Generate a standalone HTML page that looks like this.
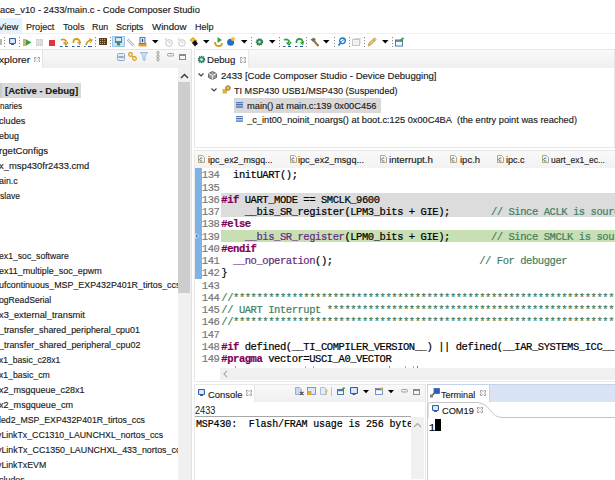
<!DOCTYPE html>
<html><head><meta charset="utf-8">
<style>
*{margin:0;padding:0;box-sizing:border-box}
html,body{width:615px;height:480px;overflow:hidden;background:#fff}
body{position:relative;font-family:"Liberation Sans",sans-serif;font-size:10px;color:#1a1a1a}
.a{position:absolute}
.t{position:absolute;white-space:nowrap;line-height:20px;-webkit-text-stroke-width:0.15px}
.c{position:absolute;white-space:nowrap;line-height:20px;font-family:"Liberation Mono",monospace;-webkit-text-stroke-width:0.2px}
.k{color:#7f0055;font-weight:bold}
.p{color:#642880}
.g{color:#3f7f5f}
.n{color:#787878}
</style></head><body>

<div class="t" style="left:0px;top:0px;font-size:9.8px;transform:scaleX(0.9531);transform-origin:0 0;color:#1a1a1a;">ace_v10 - 2433/main.c - Code Composer Studio</div>
<div class="a" style="left:0px;top:18px;width:22px;height:15px;background:#e5f1fb;"></div>
<div class="a" style="left:0px;top:33px;width:615px;height:1.2px;background:#efefef;"></div>
<div class="t" style="left:-2px;top:17px;font-size:9.8px;transform:scaleX(0.9732);transform-origin:0 0;">View</div>
<div class="t" style="left:26.3px;top:17px;font-size:9.8px;transform:scaleX(0.9278);transform-origin:0 0;">Project</div>
<div class="t" style="left:62.8px;top:17px;font-size:9.8px;transform:scaleX(0.9398);transform-origin:0 0;">Tools</div>
<div class="t" style="left:92.1px;top:17px;font-size:9.8px;transform:scaleX(0.9011);transform-origin:0 0;">Run</div>
<div class="t" style="left:116px;top:17px;font-size:9.8px;transform:scaleX(0.9115);transform-origin:0 0;">Scripts</div>
<div class="t" style="left:151.7px;top:17px;font-size:9.8px;transform:scaleX(0.9898);transform-origin:0 0;">Window</div>
<div class="t" style="left:194.6px;top:17px;font-size:9.8px;transform:scaleX(0.9228);transform-origin:0 0;">Help</div>
<div class="a" style="left:0px;top:39px;width:2px;height:6px;background:#b8b8b8;"></div>
<svg class="a" style="left:4px;top:37px" width="1" height="10" viewBox="0 0 1 10"><path d="M0.5 0v10" stroke="#8c8c8c" stroke-width="1" stroke-dasharray="1.2 1.8"/></svg>
<svg class="a" style="left:19px;top:37px" width="1" height="10" viewBox="0 0 1 10"><path d="M0.5 0v10" stroke="#8c8c8c" stroke-width="1" stroke-dasharray="1.2 1.8"/></svg>
<svg class="a" style="left:95px;top:37px" width="1" height="10" viewBox="0 0 1 10"><path d="M0.5 0v10" stroke="#8c8c8c" stroke-width="1" stroke-dasharray="1.2 1.8"/></svg>
<svg class="a" style="left:110px;top:37px" width="1" height="10" viewBox="0 0 1 10"><path d="M0.5 0v10" stroke="#8c8c8c" stroke-width="1" stroke-dasharray="1.2 1.8"/></svg>
<svg class="a" style="left:251px;top:37px" width="1" height="10" viewBox="0 0 1 10"><path d="M0.5 0v10" stroke="#8c8c8c" stroke-width="1" stroke-dasharray="1.2 1.8"/></svg>
<svg class="a" style="left:279px;top:37px" width="1" height="10" viewBox="0 0 1 10"><path d="M0.5 0v10" stroke="#8c8c8c" stroke-width="1" stroke-dasharray="1.2 1.8"/></svg>
<svg class="a" style="left:306px;top:37px" width="1" height="10" viewBox="0 0 1 10"><path d="M0.5 0v10" stroke="#8c8c8c" stroke-width="1" stroke-dasharray="1.2 1.8"/></svg>
<svg class="a" style="left:334px;top:37px" width="1" height="10" viewBox="0 0 1 10"><path d="M0.5 0v10" stroke="#8c8c8c" stroke-width="1" stroke-dasharray="1.2 1.8"/></svg>
<svg class="a" style="left:349px;top:37px" width="1" height="10" viewBox="0 0 1 10"><path d="M0.5 0v10" stroke="#8c8c8c" stroke-width="1" stroke-dasharray="1.2 1.8"/></svg>
<svg class="a" style="left:364px;top:37px" width="1" height="10" viewBox="0 0 1 10"><path d="M0.5 0v10" stroke="#8c8c8c" stroke-width="1" stroke-dasharray="1.2 1.8"/></svg>
<svg class="a" style="left:392px;top:37px" width="1" height="10" viewBox="0 0 1 10"><path d="M0.5 0v10" stroke="#8c8c8c" stroke-width="1" stroke-dasharray="1.2 1.8"/></svg>
<svg class="a" style="left:9px;top:38px" width="7" height="7" viewBox="0 0 7 7"><rect x="0.5" y="0.5" width="6" height="5" rx="1" fill="#dfe8f4" stroke="#2f5ea8" stroke-width="1.1"/><rect x="2" y="5.5" width="3" height="1.5" fill="#2f5ea8"/></svg>
<svg class="a" style="left:23px;top:39px" width="9" height="7" viewBox="0 0 9 7"><rect x="0" y="0" width="2.2" height="7" fill="#d9b44a"/><path d="M2.5 0 L8.5 3.5 L2.5 7z" fill="#3aa04a"/></svg>
<svg class="a" style="left:36px;top:39px" width="7" height="7" viewBox="0 0 7 7"><rect x="0.3" y="0.3" width="2.6" height="6.4" fill="#e2e2e2" stroke="#c4c4c4" stroke-width="0.6"/><rect x="4" y="0.3" width="2.6" height="6.4" fill="#e2e2e2" stroke="#c4c4c4" stroke-width="0.6"/></svg>
<div class="a" style="left:49px;top:40px;width:6px;height:6px;background:#e8303a;"></div>
<svg class="a" style="left:60px;top:38px" width="9" height="9" viewBox="0 0 9 9"><path d="M1 2 Q4 0.5 6 3 L5 5.5" fill="none" stroke="#d39b1c" stroke-width="1.8"/><path d="M3.5 4.5 L6 7 L8 4" fill="none" stroke="#d39b1c" stroke-width="1.4"/><path d="M0 8.5h2.5M5 8.5h3" stroke="#2a5aa0" stroke-width="1.2"/></svg>
<svg class="a" style="left:72px;top:38px" width="9" height="9" viewBox="0 0 9 9"><path d="M1.5 5 Q1 1 4.5 1 Q8 1 7.5 5" fill="none" stroke="#d39b1c" stroke-width="1.8"/><path d="M5.5 4 L7.5 6.5 L9 3.5" fill="none" stroke="#d39b1c" stroke-width="1.2"/><path d="M0 8.5h2.5M5 8.5h3" stroke="#2a5aa0" stroke-width="1.2"/></svg>
<svg class="a" style="left:84px;top:38px" width="9" height="9" viewBox="0 0 9 9"><path d="M2 7 Q3 3 7 2" fill="none" stroke="#d39b1c" stroke-width="1.8"/><path d="M5 0.5 L8 2 L6 5" fill="none" stroke="#d39b1c" stroke-width="1.2"/><path d="M0 8.5h1.5M4 8.5h4" stroke="#2a5aa0" stroke-width="1.2"/></svg>
<svg class="a" style="left:99px;top:38px" width="8" height="7" viewBox="0 0 8 7"><rect x="0" y="0" width="8" height="7" fill="#5a4020"/><path d="M1 1.5h6M1 3.5h6M1 5.5h6" stroke="#e8b050" stroke-width="0.9" stroke-dasharray="1 1"/></svg>
<div class="a" style="left:112px;top:36px;width:13px;height:11px;background:#cce4f7;border:1px solid #99c9ef"></div>
<svg class="a" style="left:114px;top:37px" width="9" height="9" viewBox="0 0 9 9"><rect x="1.5" y="0.5" width="6" height="4" fill="#dfe6f0" stroke="#5b7fb0" stroke-width="1"/><path d="M1 5.5h7" stroke="#5b7fb0"/><circle cx="4.5" cy="7" r="1.8" fill="#3a9a3a"/></svg>
<svg class="a" style="left:126px;top:38px" width="9" height="9" viewBox="0 0 9 9"><path d="M1.5 1.5 L7.5 7.5" stroke="#bdbdbd" stroke-width="2.6"/><path d="M1.5 1.5 L7.5 7.5" stroke="#eeeeee" stroke-width="1"/></svg>
<svg class="a" style="left:138px;top:37px" width="9" height="10" viewBox="0 0 9 10"><path d="M0.5 6 h8 v3.5 h-8z" fill="#e0a030"/><rect x="2" y="0.5" width="5" height="6" fill="#dfe8f2" stroke="#4a78b0"/><path d="M4.5 2v3" stroke="#1e4a90" stroke-width="1.2"/></svg>
<svg class="a" style="left:152px;top:40px" width="7" height="4" viewBox="0 0 7 4"><path d="M0 0h6.5L3.25 3.5z" fill="#000"/></svg>
<svg class="a" style="left:202.5px;top:40px" width="7" height="4" viewBox="0 0 7 4"><path d="M0 0h6.5L3.25 3.5z" fill="#000"/></svg>
<svg class="a" style="left:240.5px;top:40px" width="7" height="4" viewBox="0 0 7 4"><path d="M0 0h6.5L3.25 3.5z" fill="#000"/></svg>
<svg class="a" style="left:268.5px;top:40px" width="7" height="4" viewBox="0 0 7 4"><path d="M0 0h6.5L3.25 3.5z" fill="#000"/></svg>
<svg class="a" style="left:323px;top:40px" width="7" height="4" viewBox="0 0 7 4"><path d="M0 0h6.5L3.25 3.5z" fill="#000"/></svg>
<svg class="a" style="left:381.5px;top:40px" width="7" height="4" viewBox="0 0 7 4"><path d="M0 0h6.5L3.25 3.5z" fill="#000"/></svg>
<svg class="a" style="left:164px;top:38px" width="9" height="9" viewBox="0 0 9 9"><circle cx="5" cy="5" r="3.3" fill="#fff" stroke="#c4c4c4" stroke-width="1"/><path d="M0.5 2 L3 0.5 M5 3v2h1.5" stroke="#c4c4c4" stroke-width="0.9" fill="none"/></svg>
<svg class="a" style="left:177px;top:38px" width="9" height="9" viewBox="0 0 9 9"><circle cx="5" cy="5" r="3.3" fill="#fff" stroke="#c4c4c4" stroke-width="1"/><path d="M0.5 2 L3 0.5 M5 3v2h1.5" stroke="#c4c4c4" stroke-width="0.9" fill="none"/></svg>
<svg class="a" style="left:189px;top:37px" width="9" height="10" viewBox="0 0 9 10"><path d="M1 3 L4 0.5 L8 4 L5 7z" fill="#f0c030" stroke="#b08010" stroke-width="0.6"/><path d="M3 6 L6 3 L9 6.5 L6 9.5z" fill="#111"/></svg>
<svg class="a" style="left:214px;top:37px" width="9" height="10" viewBox="0 0 9 10"><path d="M1 5 Q1 9 4.5 9 Q8 9 8 6" fill="none" stroke="#d39b1c" stroke-width="1.8"/><path d="M4 0.5 L8 3 L4 5.5z" fill="#30a040"/><path d="M4 0.5v5" stroke="#30a040"/></svg>
<svg class="a" style="left:227px;top:37px" width="8" height="9" viewBox="0 0 8 9"><circle cx="3.6" cy="5.2" r="3.5" fill="#2a6cc0"/><circle cx="6" cy="2" r="2" fill="#f0c040"/></svg>
<svg class="a" style="left:255px;top:37px" width="9" height="10" viewBox="0 0 9 10"><circle cx="4.5" cy="5" r="3" fill="#3a9060" stroke="#2a6a4a" stroke-width="1.5" stroke-dasharray="1.2 0.9"/><circle cx="4.5" cy="5" r="1.2" fill="#c8f0c0"/></svg>
<svg class="a" style="left:283px;top:38px" width="9" height="9" viewBox="0 0 9 9"><path d="M1 2 Q4 0.5 6 3 L5 5.5" fill="none" stroke="#30a040" stroke-width="1.8"/><path d="M3.5 4.5 L6 7 L8 4" fill="none" stroke="#30a040" stroke-width="1.4"/><path d="M0 8.5h2.5M5 8.5h3" stroke="#2a5aa0" stroke-width="1.2"/></svg>
<svg class="a" style="left:295px;top:38px" width="9" height="9" viewBox="0 0 9 9"><path d="M1.5 5 Q1 1 4.5 1 Q8 1 7.5 5" fill="none" stroke="#30a040" stroke-width="1.8"/><path d="M5.5 4 L7.5 6.5 L9 3.5" fill="none" stroke="#30a040" stroke-width="1.2"/><path d="M0 8.5h2.5M5 8.5h3" stroke="#2a5aa0" stroke-width="1.2"/></svg>
<svg class="a" style="left:310px;top:37px" width="9" height="10" viewBox="0 0 9 10"><path d="M0.5 2.5 L4 0.5 L6 3 L3 5z" fill="#707070"/><path d="M4 4 L8.5 9" stroke="#a0703a" stroke-width="2"/></svg>
<svg class="a" style="left:338px;top:37px" width="8" height="9" viewBox="0 0 8 9"><circle cx="4.5" cy="3.8" r="2.8" fill="none" stroke="#1a74c0" stroke-width="1.4"/><path d="M2.5 6 L0.5 8.5" stroke="#1a74c0" stroke-width="1.6"/><path d="M3 5 L6 2.5" stroke="#1a74c0" stroke-width="0.9"/></svg>
<svg class="a" style="left:352px;top:38px" width="9" height="8" viewBox="0 0 9 8"><rect x="0.5" y="1.5" width="7" height="6" fill="#f2f2f2" stroke="#c8c8c8"/><path d="M2 0.5h7v6" fill="none" stroke="#d4d4d4"/></svg>
<svg class="a" style="left:367px;top:37px" width="10" height="10" viewBox="0 0 10 10"><path d="M1 9 L2 6 L7.5 0.8 L9.2 2.5 L3.8 8z" fill="#f0c060" stroke="#c09040" stroke-width="0.7"/><path d="M6 2.5 L7.5 4" stroke="#a0a0a0"/></svg>
<svg class="a" style="left:395px;top:37px" width="10" height="10" viewBox="0 0 10 10"><rect x="0.5" y="3" width="7" height="6" fill="#f8f8f8" stroke="#4a78b0"/><path d="M0.5 4h7" stroke="#4a78b0" stroke-width="1.5"/><path d="M5 4 L8.5 0.8" stroke="#30a040" stroke-width="1.8"/></svg>
<div class="a" style="left:0px;top:49px;width:192px;height:19px;background:linear-gradient(#f9f9f9,#efefef);border-top:1px solid #e4e4e4"></div>
<div class="a" style="left:0px;top:49px;width:43px;height:19px;background:#fff;border-top:1px solid #e4e4e4;border-right:1px solid #e4e4e4"></div>
<div class="t" style="left:-1px;top:50px;font-size:9.8px;transform:scaleX(1.0415);transform-origin:0 0;">xplorer</div>
<svg class="a" style="left:34px;top:57px" width="6" height="5" viewBox="0 0 6 5"><path d="M0.5 0.5h1.5l1 1 1-1h1.5v1.5l-1 1 1 1v1.5h-1.5l-1-1-1 1h-1.5v-1.5l1-1-1-1z" fill="none" stroke="#8a8a8a" stroke-width="0.8"/></svg>
<div class="a" style="left:191px;top:49px;width:1px;height:431px;background:#e3e3e3;"></div>
<div class="a" style="left:178px;top:68px;width:13px;height:412px;background:#f0f0f0;"></div>
<div class="a" style="left:178px;top:82px;width:12px;height:211px;background:#cdcdcd;"></div>
<svg class="a" style="left:180px;top:73px" width="9" height="6" viewBox="0 0 9 6"><path d="M1 5 L4.5 1.5 L8 5" fill="none" stroke="#404040" stroke-width="1.5"/></svg>
<div class="a" style="left:0px;top:83px;width:81px;height:15px;background:#d9d9d9;"></div>
<div class="a" style="left:0px;top:83px;width:1.5px;height:15px;background:#cbcbcb;"></div>
<div class="t" style="left:5px;top:81px;font-size:9.8px;transform:scaleX(0.9729);transform-origin:0 0;font-weight:bold;">[Active - Debug]</div>
<div class="a" style="left:0;top:68px;width:178px;height:412px;overflow:hidden">
<div class="t" style="left:0px;top:28px;font-size:9.8px;transform:scaleX(0.8279);transform-origin:0 0;">naries</div>
<div class="t" style="left:-1px;top:43px;font-size:9.8px;transform:scaleX(0.9284);transform-origin:0 0;">cludes</div>
<div class="t" style="left:-1px;top:58px;font-size:9.8px;transform:scaleX(0.9173);transform-origin:0 0;">ebug</div>
<div class="t" style="left:-1px;top:73px;font-size:9.8px;transform:scaleX(0.9817);transform-origin:0 0;">rgetConfigs</div>
<div class="t" style="left:-1px;top:88px;font-size:9.8px;transform:scaleX(0.9582);transform-origin:0 0;">x_msp430fr2433.cmd</div>
<div class="t" style="left:-1px;top:103px;font-size:9.8px;transform:scaleX(0.9033);transform-origin:0 0;">ain.c</div>
<div class="t" style="left:0px;top:118px;font-size:9.8px;transform:scaleX(0.8742);transform-origin:0 0;">slave</div>
<div class="t" style="left:-1px;top:178px;font-size:9.8px;transform:scaleX(0.8837);transform-origin:0 0;">ex1_soc_software</div>
<div class="t" style="left:-1px;top:193px;font-size:9.8px;transform:scaleX(0.9175);transform-origin:0 0;">ex11_multiple_soc_epwm</div>
<div class="t" style="left:-1px;top:207px;font-size:9.8px;transform:scaleX(0.905);transform-origin:0 0;">ufcontinuous_MSP_EXP432P401R_tirtos_ccs</div>
<div class="t" style="left:-1px;top:222px;font-size:9.8px;transform:scaleX(0.8790);transform-origin:0 0;">ogReadSerial</div>
<div class="t" style="left:-1px;top:237px;font-size:9.8px;transform:scaleX(0.9443);transform-origin:0 0;">x3_external_transmit</div>
<div class="t" style="left:-1px;top:252px;font-size:9.8px;transform:scaleX(0.9074);transform-origin:0 0;">_transfer_shared_peripheral_cpu01</div>
<div class="t" style="left:-1px;top:267px;font-size:9.8px;transform:scaleX(0.9106);transform-origin:0 0;">_transfer_shared_peripheral_cpu02</div>
<div class="t" style="left:-1px;top:282px;font-size:9.8px;transform:scaleX(0.8736);transform-origin:0 0;">x1_basic_c28x1</div>
<div class="t" style="left:-1px;top:297px;font-size:9.8px;transform:scaleX(0.8882);transform-origin:0 0;">x1_basic_cm</div>
<div class="t" style="left:-1px;top:312px;font-size:9.8px;transform:scaleX(0.9188);transform-origin:0 0;">x2_msgqueue_c28x1</div>
<div class="t" style="left:-1px;top:327px;font-size:9.8px;transform:scaleX(0.9253);transform-origin:0 0;">x2_msgqueue_cm</div>
<div class="t" style="left:-1px;top:342px;font-size:9.8px;transform:scaleX(0.8933);transform-origin:0 0;">led2_MSP_EXP432P401R_tirtos_ccs</div>
<div class="t" style="left:-3px;top:357px;font-size:9.8px;transform:scaleX(0.8942);transform-origin:0 0;">yLinkTx_CC1310_LAUNCHXL_nortos_ccs</div>
<div class="t" style="left:-3px;top:372px;font-size:9.8px;transform:scaleX(0.905);transform-origin:0 0;">yLinkTx_CC1350_LAUNCHXL_433_nortos_ccs</div>
<div class="t" style="left:-3px;top:387px;font-size:9.8px;transform:scaleX(0.8945);transform-origin:0 0;">yLinkTxEVM</div>
<div class="t" style="left:-1px;top:402px;font-size:9.8px;transform:scaleX(0.91);transform-origin:0 0;">cludes</div>
</div>
<svg class="a" style="left:116.5px;top:53px" width="8" height="8" viewBox="0 0 8 8"><rect x="0.5" y="0.5" width="7" height="7" rx="1" fill="#e4ecf6" stroke="#8aaad0"/><path d="M1.5 4h5" stroke="#6a7a90" stroke-width="1.2"/></svg>
<svg class="a" style="left:128px;top:52px" width="9" height="9" viewBox="0 0 9 9"><circle cx="2.5" cy="2.5" r="1.8" fill="none" stroke="#d49a20" stroke-width="1.2"/><circle cx="6.5" cy="6.5" r="1.8" fill="none" stroke="#d49a20" stroke-width="1.2"/><path d="M3.5 3.5 L5.5 5.5" stroke="#d49a20"/></svg>
<svg class="a" style="left:140px;top:52px" width="8" height="9" viewBox="0 0 8 9"><path d="M0.5 0.5h7L5 4v4.5L3 7.5V4z" fill="#d8e6f6" stroke="#8ab0d8" stroke-width="0.9"/></svg>
<svg class="a" style="left:156px;top:51px" width="4" height="11" viewBox="0 0 4 11"><ellipse cx="2" cy="1.7" rx="1.1" ry="1.4" fill="none" stroke="#8a8a8a" stroke-width="0.8"/><ellipse cx="2" cy="5.2" rx="1.1" ry="1.4" fill="none" stroke="#8a8a8a" stroke-width="0.8"/><ellipse cx="2" cy="8.7" rx="1.1" ry="1.4" fill="none" stroke="#8a8a8a" stroke-width="0.8"/></svg>
<svg class="a" style="left:166.5px;top:53px" width="7" height="4" viewBox="0 0 7 4"><rect x="0.5" y="0.5" width="6" height="2.5" rx="1" fill="none" stroke="#9a9a9a" stroke-width="1"/></svg>
<svg class="a" style="left:179px;top:53.5px" width="7" height="6" viewBox="0 0 7 6"><rect x="0.5" y="0.5" width="6" height="5" fill="none" stroke="#8a8a8a" stroke-width="1"/><path d="M0.5 1.5h6" stroke="#8a8a8a" stroke-width="1"/></svg>
<div class="a" style="left:194px;top:49px;width:421px;height:99px;background:#fff;border:1px solid #e8e8e8;border-right:1px solid #e8e8e8"></div>
<div class="a" style="left:195px;top:50px;width:419px;height:18px;background:linear-gradient(#f9f9f9,#efefef);"></div>
<div class="a" style="left:195px;top:50px;width:54px;height:18px;background:#fff;border-right:1px solid #e8e8e8"></div>
<svg class="a" style="left:196.5px;top:54.5px" width="9" height="9" viewBox="0 0 9 9"><circle cx="4.5" cy="4.5" r="3" fill="#3a9a7a" stroke="#2a6a5a" stroke-width="1.6" stroke-dasharray="1.1 0.8"/><circle cx="4.5" cy="4.5" r="1.3" fill="#e0f8c0"/></svg>
<div class="t" style="left:207.3px;top:50px;font-size:9.8px;transform:scaleX(0.9799);transform-origin:0 0;">Debug</div>
<svg class="a" style="left:239.5px;top:56.5px" width="6" height="6" viewBox="0 0 6 6"><path d="M0.5 0.5h1.5l1 1 1-1h1.5v1.5l-1 1 1 1v1.5h-1.5l-1-1-1 1h-1.5v-1.5l1-1-1-1z" fill="none" stroke="#8a8a8a" stroke-width="0.8"/></svg>
<svg class="a" style="left:198px;top:73px" width="6" height="4" viewBox="0 0 6 4"><path d="M0.5 0.5 L3 3 L5.5 0.5" fill="none" stroke="#444" stroke-width="1.2"/></svg>
<svg class="a" style="left:211px;top:88px" width="6" height="4" viewBox="0 0 6 4"><path d="M0.5 0.5 L3 3 L5.5 0.5" fill="none" stroke="#444" stroke-width="1.2"/></svg>
<svg class="a" style="left:208px;top:71px" width="9" height="9" viewBox="0 0 9 9"><path d="M4.5 0.5 L8.5 2.5 V6.5 L4.5 8.5 L0.5 6.5 V2.5z" fill="#9a9a9a" stroke="#606060" stroke-width="0.9"/><path d="M0.5 2.5 L4.5 4.5 L8.5 2.5 M4.5 4.5V8.5" fill="none" stroke="#f0f0f0" stroke-width="0.9"/></svg>
<svg class="a" style="left:222px;top:85px" width="9" height="9" viewBox="0 0 9 9"><rect x="0.5" y="4" width="4.5" height="4.5" fill="#e0b040"/><circle cx="6" cy="3" r="2.3" fill="#e8c050" stroke="#8a6a30" stroke-width="0.9"/></svg>
<div class="a" style="left:234px;top:98px;width:147px;height:15px;background:#d9d9d9;"></div>
<div class="t" style="left:221px;top:66px;font-size:9.8px;transform:scaleX(0.9772);transform-origin:0 0;">2433 [Code Composer Studio - Device Debugging]</div>
<div class="t" style="left:234.1px;top:81px;font-size:9.8px;transform:scaleX(0.9269);transform-origin:0 0;">TI MSP430 USB1/MSP430 (Suspended)</div>
<svg class="a" style="left:236px;top:101.5px" width="7" height="6" viewBox="0 0 7 6"><path d="M0 0.7h7M0 2.4h7M0 4.1h7M0 5.8h7" stroke="#3a6ab0" stroke-width="1"/></svg>
<svg class="a" style="left:236px;top:116px" width="7" height="6" viewBox="0 0 7 6"><path d="M0 0.7h7M0 2.4h7M0 4.1h7M0 5.8h7" stroke="#3a6ab0" stroke-width="1"/></svg>
<div class="t" style="left:246.5px;top:96px;font-size:9.8px;transform:scaleX(0.9471);transform-origin:0 0;">main() at main.c:139 0x00C456</div>
<div class="t" style="left:246.5px;top:110px;font-size:9.8px;transform:scaleX(0.9453);transform-origin:0 0;">_c_int00_noinit_noargs() at boot.c:125 0x00C4BA&nbsp; (the entry point was reached)</div>
<div class="a" style="left:194px;top:150px;width:421px;height:232px;background:#fff;border:1px solid #e8e8e8;border-right:none"></div>
<div class="a" style="left:195px;top:151px;width:420px;height:17px;background:linear-gradient(#f9f9f9,#f2f2f2);"></div>
<svg class="a" style="left:198px;top:155px" width="7" height="8" viewBox="0 0 7 8"><path d="M0.5 0.5h4l2 2v5h-6z" fill="#fbf6e6" stroke="#a89060" stroke-width="0.8"/><path d="M4.3 3.3a1.6 1.6 0 1 0 0 2.6" fill="none" stroke="#3a6ab0" stroke-width="1"/></svg>
<div class="t" style="left:207.6px;top:150px;font-size:9.8px;transform:scaleX(0.9038);transform-origin:0 0;">ipc_ex2_msgq...</div>
<svg class="a" style="left:289.7px;top:155px" width="7" height="8" viewBox="0 0 7 8"><path d="M0.5 0.5h4l2 2v5h-6z" fill="#fbf6e6" stroke="#a89060" stroke-width="0.8"/><path d="M4.3 3.3a1.6 1.6 0 1 0 0 2.6" fill="none" stroke="#3a6ab0" stroke-width="1"/></svg>
<div class="t" style="left:298px;top:150px;font-size:9.8px;transform:scaleX(0.9249);transform-origin:0 0;">ipc_ex2_msgq...</div>
<svg class="a" style="left:380px;top:155px" width="7" height="8" viewBox="0 0 7 8"><path d="M0.5 0.5h4l2 2v5h-6z" fill="#fbf6e6" stroke="#a89060" stroke-width="0.8"/><path d="M4.3 3.3a1.6 1.6 0 1 0 0 2.6" fill="none" stroke="#3a6ab0" stroke-width="1"/></svg>
<div class="t" style="left:389px;top:150px;font-size:9.8px;transform:scaleX(0.9972);transform-origin:0 0;">interrupt.h</div>
<svg class="a" style="left:450.4px;top:155px" width="7" height="8" viewBox="0 0 7 8"><path d="M0.5 0.5h4l2 2v5h-6z" fill="#fbf6e6" stroke="#a89060" stroke-width="0.8"/><path d="M4.3 3.3a1.6 1.6 0 1 0 0 2.6" fill="none" stroke="#3a6ab0" stroke-width="1"/></svg>
<div class="t" style="left:459.5px;top:150px;font-size:9.8px;transform:scaleX(0.9710);transform-origin:0 0;">ipc.h</div>
<svg class="a" style="left:497px;top:155px" width="7" height="8" viewBox="0 0 7 8"><path d="M0.5 0.5h4l2 2v5h-6z" fill="#fbf6e6" stroke="#a89060" stroke-width="0.8"/><path d="M4.3 3.3a1.6 1.6 0 1 0 0 2.6" fill="none" stroke="#3a6ab0" stroke-width="1"/></svg>
<div class="t" style="left:506px;top:150px;font-size:9.8px;transform:scaleX(0.9231);transform-origin:0 0;">ipc.c</div>
<svg class="a" style="left:541.8px;top:155px" width="7" height="8" viewBox="0 0 7 8"><path d="M0.5 0.5h4l2 2v5h-6z" fill="#fbf6e6" stroke="#a89060" stroke-width="0.8"/><path d="M4.3 3.3a1.6 1.6 0 1 0 0 2.6" fill="none" stroke="#3a6ab0" stroke-width="1"/></svg>
<div class="t" style="left:551px;top:150px;font-size:9.8px;transform:scaleX(0.8695);transform-origin:0 0;">uart_ex1_ec...</div>
<div class="a" style="left:195px;top:168px;width:7px;height:111px;background:#7fb2e5;"></div>
<svg class="a" style="left:195px;top:233px" width="5" height="6" viewBox="0 0 5 6"><path d="M0.5 0.5 L4 3 L0.5 5.5z" fill="#4a7ab0" stroke="#fff" stroke-width="0.6"/></svg>
<div class="a" style="left:220.5px;top:193px;width:395px;height:24px;background:#dcdcdc;"></div>
<div class="a" style="left:220.5px;top:229.5px;width:395px;height:12px;background:#c8dfb4;"></div>
<div class="a" style="left:195px;top:168px;width:420px;height:199px;overflow:hidden">
<div class="c n" style="left:6.800000000000011px;top:-3px;font-size:10.5px;letter-spacing:-0.440px">134</div>
<div class="c" style="left:26.30000000000001px;top:-3px;font-size:10.5px;letter-spacing:-0.440px;color:#000">&nbsp; initUART();</div>
<div class="c n" style="left:6.800000000000011px;top:10px;font-size:10.5px;letter-spacing:-0.440px">135</div>
<div class="c n" style="left:6.800000000000011px;top:22px;font-size:10.5px;letter-spacing:-0.440px">136</div>
<div class="c" style="left:26.30000000000001px;top:22px;font-size:10.5px;letter-spacing:-0.440px;color:#000"><span class="k">#if</span> UART_MODE == SMCLK_9600</div>
<div class="c n" style="left:6.800000000000011px;top:34px;font-size:10.5px;letter-spacing:-0.440px">137</div>
<div class="c" style="left:26.30000000000001px;top:34px;font-size:10.5px;letter-spacing:-0.440px;color:#000">&nbsp; &nbsp; __bis_SR_register(LPM3_bits + GIE);&nbsp; &nbsp; &nbsp; &nbsp;<span class="g">// Since ACLK is source</span></div>
<div class="c n" style="left:6.800000000000011px;top:46px;font-size:10.5px;letter-spacing:-0.440px">138</div>
<div class="c" style="left:26.30000000000001px;top:46px;font-size:10.5px;letter-spacing:-0.440px;color:#000"><span class="k">#else</span></div>
<div class="c n" style="left:6.800000000000011px;top:59px;font-size:10.5px;letter-spacing:-0.440px">139</div>
<div class="c" style="left:26.30000000000001px;top:59px;font-size:10.5px;letter-spacing:-0.440px;color:#000">&nbsp; &nbsp; <span class="p">__bis_SR_register</span>(LPM0_bits + GIE);&nbsp; &nbsp; &nbsp; &nbsp;<span class="g">// Since SMCLK is source</span></div>
<div class="c n" style="left:6.800000000000011px;top:71px;font-size:10.5px;letter-spacing:-0.440px">140</div>
<div class="c" style="left:26.30000000000001px;top:71px;font-size:10.5px;letter-spacing:-0.440px;color:#000"><span class="k">#endif</span></div>
<div class="c n" style="left:6.800000000000011px;top:83px;font-size:10.5px;letter-spacing:-0.440px">141</div>
<div class="c" style="left:26.30000000000001px;top:83px;font-size:10.5px;letter-spacing:-0.440px;color:#000">&nbsp; <span class="p">__no_operation</span>();&nbsp; &nbsp; &nbsp; &nbsp; &nbsp; &nbsp; &nbsp; &nbsp; &nbsp; &nbsp; &nbsp; &nbsp; &nbsp;<span class="g">// For debugger</span></div>
<div class="c n" style="left:6.800000000000011px;top:95px;font-size:10.5px;letter-spacing:-0.440px">142</div>
<div class="c" style="left:26.30000000000001px;top:95px;font-size:10.5px;letter-spacing:-0.440px;color:#000">}</div>
<div class="c n" style="left:6.800000000000011px;top:108px;font-size:10.5px;letter-spacing:-0.440px">143</div>
<div class="c n" style="left:6.800000000000011px;top:120px;font-size:10.5px;letter-spacing:-0.440px">144</div>
<div class="c" style="left:26.30000000000001px;top:120px;font-size:10.5px;letter-spacing:-0.440px;color:#000"><span class="g">//********************************************************************************</span></div>
<div class="c n" style="left:6.800000000000011px;top:132px;font-size:10.5px;letter-spacing:-0.440px">145</div>
<div class="c" style="left:26.30000000000001px;top:132px;font-size:10.5px;letter-spacing:-0.440px;color:#000"><span class="g">// UART Interrupt ********************************************************************************</span></div>
<div class="c n" style="left:6.800000000000011px;top:144px;font-size:10.5px;letter-spacing:-0.440px">146</div>
<div class="c" style="left:26.30000000000001px;top:144px;font-size:10.5px;letter-spacing:-0.440px;color:#000"><span class="g">//********************************************************************************</span></div>
<div class="c n" style="left:6.800000000000011px;top:157px;font-size:10.5px;letter-spacing:-0.440px">147</div>
<div class="c n" style="left:6.800000000000011px;top:169px;font-size:10.5px;letter-spacing:-0.440px">148</div>
<div class="c" style="left:26.30000000000001px;top:169px;font-size:10.5px;letter-spacing:-0.440px;color:#000"><span class="k">#if</span> defined(__TI_COMPILER_VERSION__) || defined(__IAR_SYSTEMS_ICC__)</div>
<div class="c n" style="left:6.800000000000011px;top:181px;font-size:10.5px;letter-spacing:-0.440px">149</div>
<div class="c" style="left:26.30000000000001px;top:181px;font-size:10.5px;letter-spacing:-0.440px;color:#000"><span class="k">#pragma</span> vector=USCI_A0_VECTOR</div>
</div>
<div class="a" style="left:235px;top:366px;width:1.2px;height:1.5px;background:#c890b8;"></div>
<div class="a" style="left:305px;top:366px;width:1.2px;height:1.5px;background:#d0a0c0;"></div>
<div class="a" style="left:313px;top:366px;width:1.2px;height:1.5px;background:#d0a0c0;"></div>
<div class="a" style="left:388.5px;top:366px;width:1.2px;height:1.5px;background:#8090b0;"></div>
<div class="a" style="left:405px;top:366px;width:1.2px;height:1.5px;background:#d0a0c0;"></div>
<div class="a" style="left:412.5px;top:366px;width:1.2px;height:1.5px;background:#d0a0c0;"></div>
<div class="a" style="left:417px;top:366px;width:1.2px;height:1.5px;background:#707890;"></div>
<div class="a" style="left:219.7px;top:367.5px;width:395.3px;height:12.5px;background:#f0f0f0;"></div>
<svg class="a" style="left:223px;top:370px" width="5" height="8" viewBox="0 0 5 8"><path d="M4 0.8 L1 4 L4 7.2" fill="none" stroke="#a8a8a8" stroke-width="1.1"/></svg>
<div class="a" style="left:194px;top:384px;width:232px;height:97px;background:#fff;border:1px solid #e8e8e8;border-bottom:none"></div>
<div class="a" style="left:195px;top:385px;width:230px;height:17px;background:linear-gradient(#f9f9f9,#efefef);"></div>
<div class="a" style="left:195px;top:385px;width:60px;height:17px;background:#fff;border-right:1px solid #e8e8e8"></div>
<svg class="a" style="left:198px;top:389px" width="7" height="7" viewBox="0 0 7 7"><rect x="0.5" y="0.5" width="6" height="5" rx="1" fill="#dfe8f4" stroke="#2f5ea8" stroke-width="1.1"/><path d="M2 6.5h3" stroke="#2f5ea8"/></svg>
<div class="t" style="left:207.5px;top:385px;font-size:9.8px;transform:scaleX(0.9595);transform-origin:0 0;">Console</div>
<svg class="a" style="left:246px;top:390px" width="6" height="6" viewBox="0 0 6 6"><path d="M0.5 0.5h1.5l1 1 1-1h1.5v1.5l-1 1 1 1v1.5h-1.5l-1-1-1 1h-1.5v-1.5l1-1-1-1z" fill="none" stroke="#8a8a8a" stroke-width="0.8"/></svg>
<svg class="a" style="left:295px;top:387px" width="9" height="8" viewBox="0 0 9 8"><path d="M0.5 0.5h4l2 2v5h-6z" fill="#c8d8f0" stroke="#8aa0c0" stroke-width="0.8"/><path d="M5 5 L8.5 8 M8.5 5 L5 8" stroke="#444" stroke-width="1.1"/></svg>
<svg class="a" style="left:307px;top:387px" width="9" height="8" viewBox="0 0 9 8"><rect x="0.5" y="0.5" width="8" height="7" fill="#dce8f6" stroke="#5a88c0" stroke-width="0.8"/><rect x="0.5" y="4" width="4" height="4" fill="#e8a830"/></svg>
<svg class="a" style="left:319.5px;top:387px" width="9" height="8" viewBox="0 0 9 8"><path d="M0.5 0.5h4l2 2v5h-6z" fill="#e6ecf4" stroke="#9ab0d0" stroke-width="0.8"/><path d="M5 2 L8 4 L5 7z" fill="#f0c040"/></svg>
<div class="a" style="left:331px;top:387px;width:1px;height:9px;background:#c0c0c0;"></div>
<svg class="a" style="left:337px;top:387px" width="8" height="8" viewBox="0 0 8 8"><rect x="0.5" y="2.5" width="6" height="5" fill="#f4f4f4" stroke="#4a78b0"/><path d="M0.5 3.5h6" stroke="#4a78b0" stroke-width="1.4"/><path d="M4 3.5 L7.5 0.5" stroke="#30a040" stroke-width="1.6"/></svg>
<svg class="a" style="left:349.5px;top:387px" width="8" height="8" viewBox="0 0 8 8"><rect x="0.5" y="0.5" width="7" height="6" rx="1" fill="#dfe8f4" stroke="#2f5ea8" stroke-width="1.1"/><path d="M2.5 7.5h3" stroke="#2f5ea8"/></svg>
<svg class="a" style="left:362.5px;top:389.5px" width="7" height="4" viewBox="0 0 7 4"><path d="M0 0h6L3 3.3z" fill="#000"/></svg>
<svg class="a" style="left:374.5px;top:387px" width="9" height="8" viewBox="0 0 9 8"><rect x="0.5" y="1.5" width="7" height="6" fill="#f8f8f8" stroke="#5a7ab0" stroke-width="0.8"/><path d="M0.5 2.5h7" stroke="#5a7ab0" stroke-width="1.4"/><circle cx="7" cy="1.5" r="1.3" fill="#f0b030"/></svg>
<svg class="a" style="left:388px;top:389.5px" width="7" height="4" viewBox="0 0 7 4"><path d="M0 0h6L3 3.3z" fill="#000"/></svg>
<svg class="a" style="left:400.5px;top:388.5px" width="7" height="4" viewBox="0 0 7 4"><rect x="0.5" y="0.5" width="6" height="2.5" rx="1" fill="none" stroke="#9a9a9a" stroke-width="1"/></svg>
<svg class="a" style="left:412.5px;top:388.5px" width="7" height="6" viewBox="0 0 7 6"><rect x="0.5" y="0.5" width="6" height="5" fill="none" stroke="#8a8a8a" stroke-width="1"/><path d="M0.5 1.5h6" stroke="#8a8a8a" stroke-width="1"/></svg>
<div class="t" style="left:195px;top:400px;font-size:10.5px;transform:scaleX(0.8776);transform-origin:0 0;-webkit-text-stroke-width:0;">2433</div>
<div class="a" style="left:195px;top:416px;width:216px;height:1px;background:#a8a8a8;"></div>
<div class="c" style="left:196px;top:415px;font-size:10px;letter-spacing:-0.140px;color:#000">MSP430:&nbsp; Flash/FRAM usage is 256 byte</div>
<div class="a" style="left:411px;top:417px;width:13px;height:62px;background:#f0f0f0;"></div>
<svg class="a" style="left:413px;top:422px" width="9" height="6" viewBox="0 0 9 6"><path d="M1 5 L4.5 1.5 L8 5" fill="none" stroke="#a8a8a8" stroke-width="1.2"/></svg>
<div class="a" style="left:427px;top:384px;width:188px;height:97px;background:#fff;border:1px solid #c5d3e8;border-right:none;border-bottom:none"></div>
<div class="a" style="left:428px;top:385px;width:187px;height:17px;background:#dae3f3;"></div>
<div class="a" style="left:428px;top:385px;width:62px;height:17px;background:#fff;border-right:1px solid #c5d3e8"></div>
<svg class="a" style="left:430px;top:388px" width="10" height="10" viewBox="0 0 10 10"><rect x="4" y="0.5" width="5.5" height="5" fill="#2a5cc8" stroke="#4a6a9a" stroke-width="0.8"/><path d="M4.5 5 L1 8.5" stroke="#606060" stroke-width="1.6"/><rect x="0" y="6.5" width="3" height="3" fill="#808080"/></svg>
<div class="t" style="left:441px;top:385px;font-size:9.8px;transform:scaleX(0.9235);transform-origin:0 0;">Terminal</div>
<svg class="a" style="left:479.5px;top:390px" width="6" height="6" viewBox="0 0 6 6"><path d="M0.5 0.5h1.5l1 1 1-1h1.5v1.5l-1 1 1 1v1.5h-1.5l-1-1-1 1h-1.5v-1.5l1-1-1-1z" fill="none" stroke="#8a8a8a" stroke-width="0.8"/></svg>
<svg class="a" style="left:427px;top:402px" width="188" height="17" viewBox="0 0 188 17"><path d="M1 16 V3 Q1 0.5 4 0.5 H50 Q58 1 63 8 Q68 15.5 75 15.5 H188" fill="none" stroke="#c4c4c4" stroke-width="1"/></svg>
<svg class="a" style="left:432px;top:405px" width="7" height="7" viewBox="0 0 7 7"><rect x="0.5" y="0.5" width="6" height="5" rx="1" fill="#dfe8f4" stroke="#2f5ea8" stroke-width="1.1"/><path d="M2 6.5h3" stroke="#2f5ea8"/></svg>
<div class="t" style="left:441.7px;top:401px;font-size:9.8px;transform:scaleX(0.9418);transform-origin:0 0;">COM19</div>
<svg class="a" style="left:477px;top:407px" width="6" height="6" viewBox="0 0 6 6"><path d="M0.5 0.5h1.5l1 1 1-1h1.5v1.5l-1 1 1 1v1.5h-1.5l-1-1-1 1h-1.5v-1.5l1-1-1-1z" fill="none" stroke="#8a8a8a" stroke-width="0.8"/></svg>
<div class="c" style="left:429px;top:419px;font-size:10px;color:#000">1</div>
<div class="a" style="left:435px;top:419px;width:6px;height:12px;background:#000;"></div>
</body></html>
